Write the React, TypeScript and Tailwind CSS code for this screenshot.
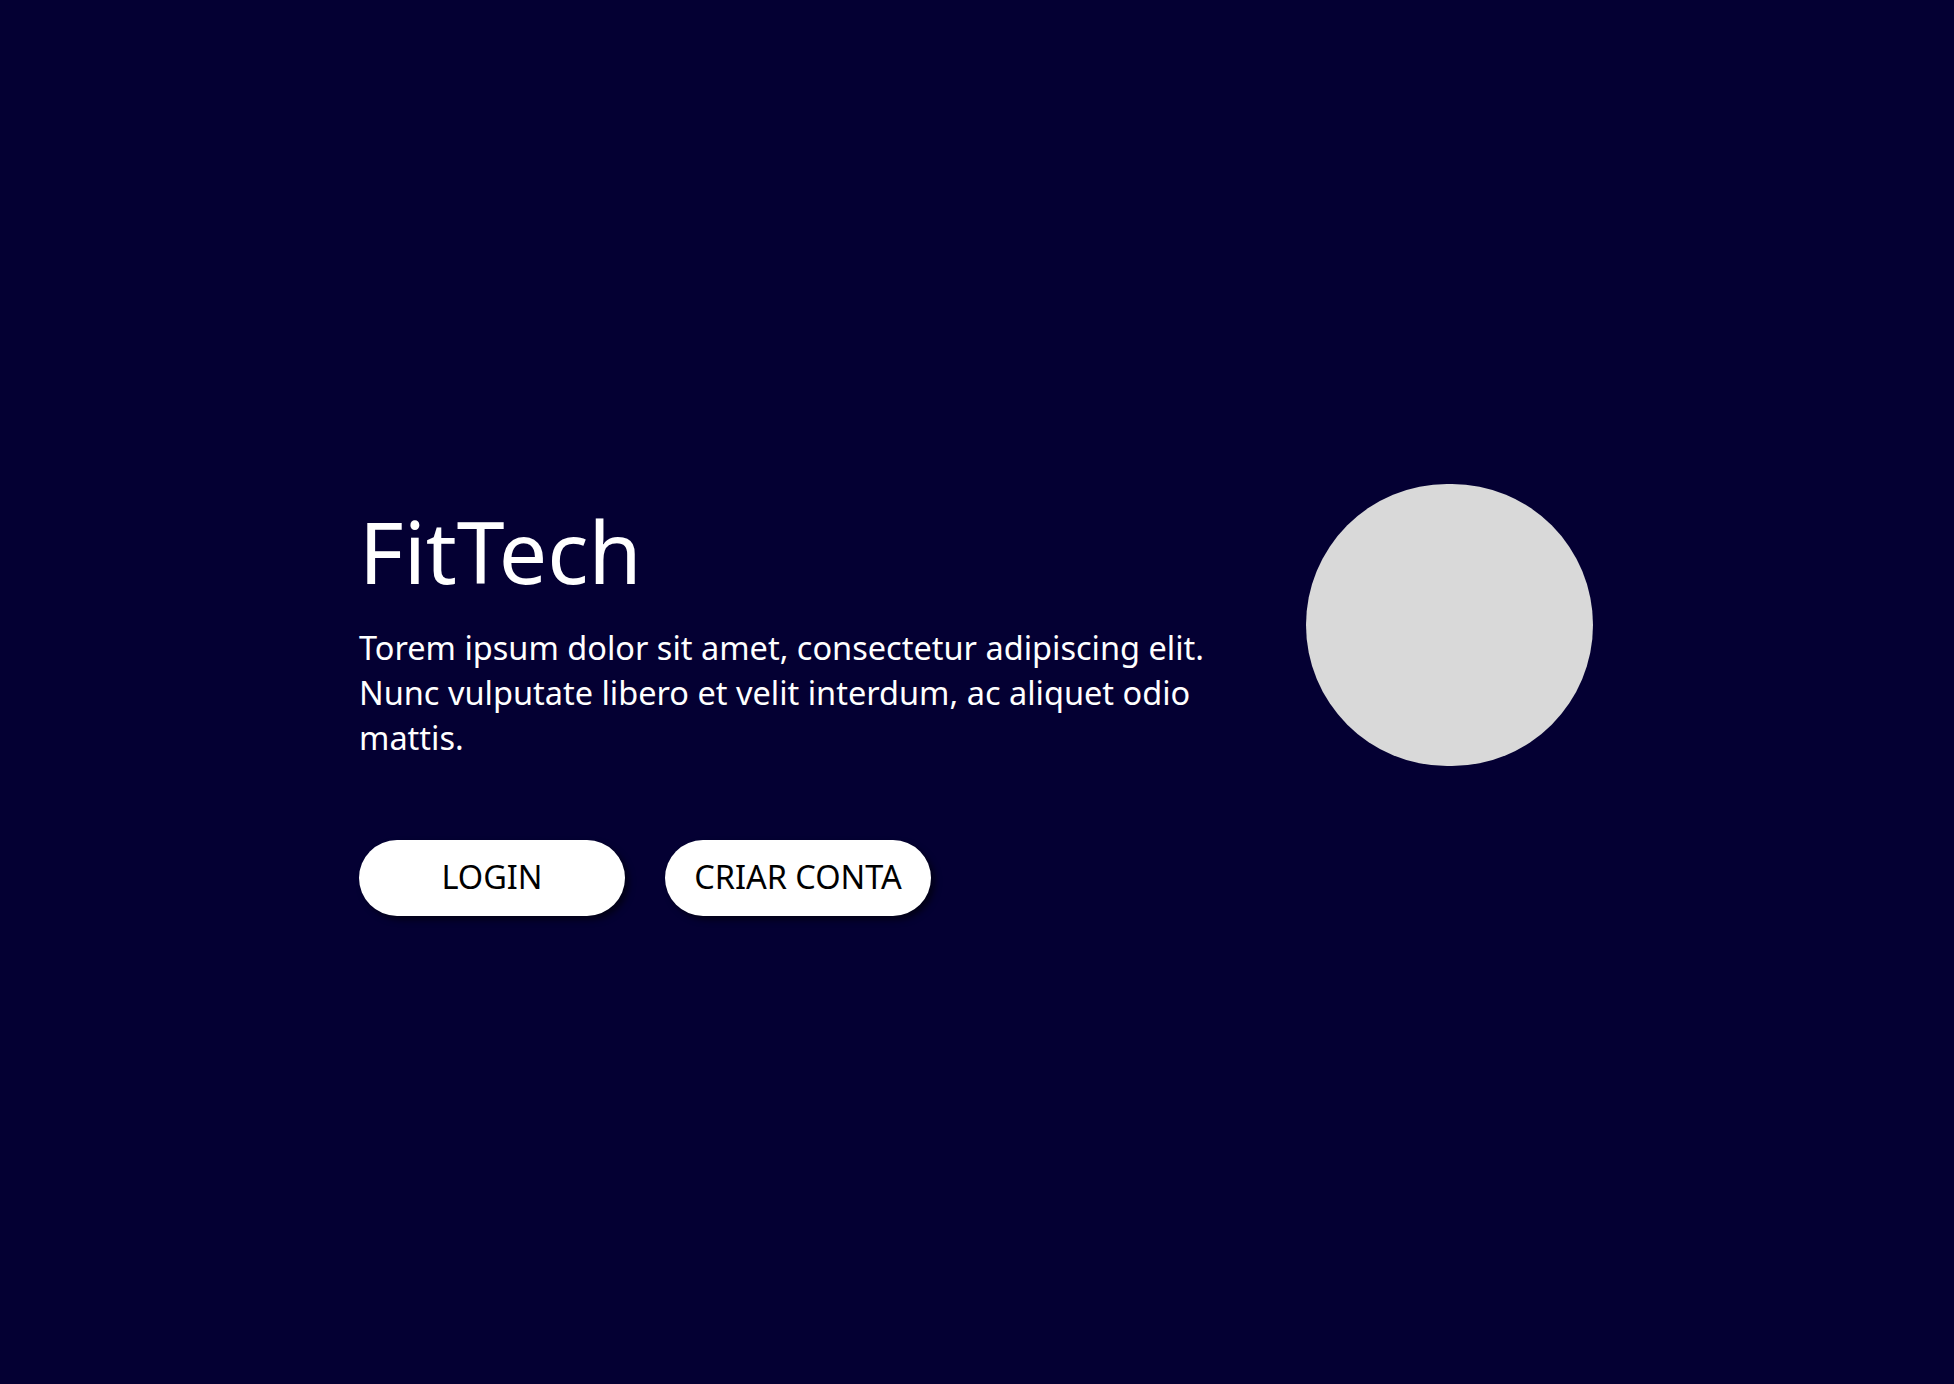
export default function App() {
  return (
    <main className="min-h-screen bg-[#040033] flex items-center justify-center pt-[16px] pr-[2px] font-['Noto_Sans',sans-serif]">
      <div className="flex items-start gap-[67px]">
        <div className="w-[880px] pt-[8px] text-white">
          <h1 className="text-[86px] font-normal leading-[1.362]">FitTech</h1>
          <p className="mt-[15px] text-[32.5px] leading-[45px]">
            Torem ipsum dolor sit amet, consectetur adipiscing elit. Nunc vulputate libero et velit interdum, ac aliquet odio mattis.
          </p>

          <div className="mt-[80px] flex items-center gap-[40px]">
            {['LOGIN', 'CRIAR CONTA'].map((label) => (
              <button
                key={label}
                className="w-[266px] h-[76px] rounded-full bg-white text-black text-[32.5px] shadow-[4px_4px_6px_rgba(0,0,0,0.55)]"
              >
                {label}
              </button>
            ))}
          </div>
        </div>

        <div className="w-[287px] h-[282px] rounded-full bg-[#d9d9d9]" />
      </div>
    </main>
  );
}
